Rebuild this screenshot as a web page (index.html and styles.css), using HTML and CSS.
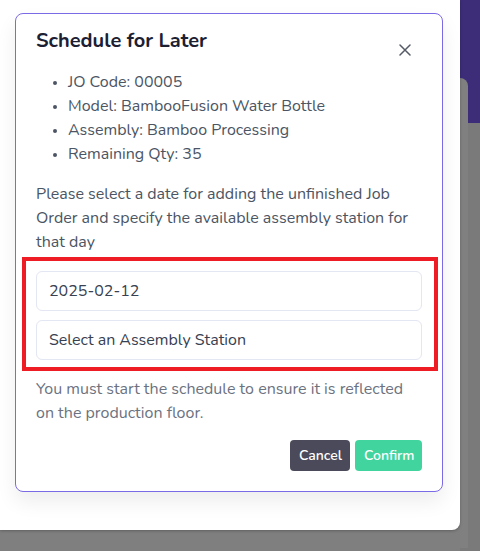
FILE: index.html
```html
<!DOCTYPE html>
<html>
<head>
<meta charset="utf-8">
<link rel="stylesheet" href="styles.css">
</head>
<body>
<div class="screen">
  <div class="sheet">
    <div class="modal">
      <div class="modal-head">
        <h2 class="title">Schedule for Later</h2>
        <button class="close" aria-label="Close">
          <svg width="12" height="12" viewBox="0 0 12 12"><path d="M1 1L11 11M11 1L1 11" stroke="#555b66" stroke-width="1.5" stroke-linecap="round"/></svg>
        </button>
      </div>
      <ul class="details">
        <li>JO Code: 00005</li>
        <li>Model: BambooFusion Water Bottle</li>
        <li>Assembly: Bamboo Processing</li>
        <li>Remaining Qty: 35</li>
      </ul>
      <p class="intro">Please select a date for adding the unfinished Job Order and specify the available assembly station for that day</p>
      <div class="fields">
        <div class="field">2025-02-12</div>
        <div class="field">Select an Assembly Station</div>
        <div class="highlight"></div>
      </div>
      <p class="note">You must start the schedule to ensure it is reflected on the production floor.</p>
      <div class="actions">
        <button class="btn btn-cancel">Cancel</button>
        <button class="btn btn-confirm">Confirm</button>
      </div>
    </div>
  </div>
  <div class="behind">
    <div class="behind-header"></div>
    <div class="behind-card"></div>
  </div>
</div>
</body>
</html>
```
FILE: styles.css
```css
* { box-sizing: border-box; }
html, body { margin: 0; padding: 0; }
body {
  background: #7f7f7f;
  font-family: "Nunito", "Lato", "Noto Sans", sans-serif;
  width: 480px;
  height: 551px;
  overflow: hidden;
}
.screen {
  display: flex;
  height: 551px;
  align-items: flex-start;
}
.sheet {
  width: 460px;
  height: 530px;
  background: #fff;
  border-bottom-right-radius: 8px;
  padding: 13px 17px 0 15px;
  box-shadow: 0 1px 3px rgba(0,0,0,0.25);
  position: relative;
  z-index: 1;
}
.behind {
  flex: 1;
  height: 551px;
  display: flex;
  flex-direction: column;
  background: #7a7a7a;
}
.behind-header {
  height: 123px;
  background: #3d2d78;
}
.behind-card {
  margin-top: -45px;
  width: 8px;
  height: 470px;
  background: #808080;
  border-top-right-radius: 8px;
}
.modal {
  width: 428px;
  border: 1px solid #7b6ae6;
  border-radius: 8px;
  padding: 13px 20px 20px 20px;
  background: #fff;
  box-shadow: 0 10px 20px rgba(0,0,0,0.07);
}
.modal-head {
  display: flex;
  justify-content: space-between;
  align-items: flex-start;
}
.title {
  margin: 0;
  font-size: 20px;
  line-height: 28px;
  font-weight: 700;
  color: #1c2033;
}
.close {
  border: 0;
  background: none;
  padding: 0;
  margin: 17px 11px 0 0;
  width: 12px;
  height: 12px;
  display: flex;
}
.details {
  margin: 14px 0 0 0;
  padding-left: 32px;
  list-style: disc;
  font-size: 16px;
  line-height: 24px;
  color: #4b5563;
}
.details li::marker { color: #4b5563; font-size: 13px; }
.intro {
  margin: 16px 0 0 0;
  font-size: 16px;
  line-height: 24px;
  color: #4b5563;
}
.fields {
  position: relative;
  margin-top: 17px;
  display: flex;
  flex-direction: column;
  gap: 9px;
}
.field {
  height: 40px;
  border: 1px solid #e3e6f3;
  border-radius: 6px;
  padding: 0 12px;
  display: flex;
  align-items: center;
  font-size: 16px;
  color: #374151;
}
.highlight {
  position: absolute;
  left: -14px;
  right: -16px;
  top: -14px;
  bottom: -11px;
  border: 4px solid #ee1c25;
  pointer-events: none;
}
.note {
  margin: 17px 0 0 0;
  font-size: 16px;
  line-height: 24px;
  color: #6b7280;
}
.actions {
  margin-top: 15px;
  display: flex;
  justify-content: flex-end;
  gap: 5px;
}
.btn {
  border: 0;
  border-radius: 4px;
  height: 31px;
  padding: 0 9px;
  font-family: inherit;
  font-size: 14px;
  font-weight: 600;
  color: #fff;
}
.btn-cancel { background: #4a4a5a; width: 60px; }
.btn-confirm { background: #42d49e; width: 67px; }
```
